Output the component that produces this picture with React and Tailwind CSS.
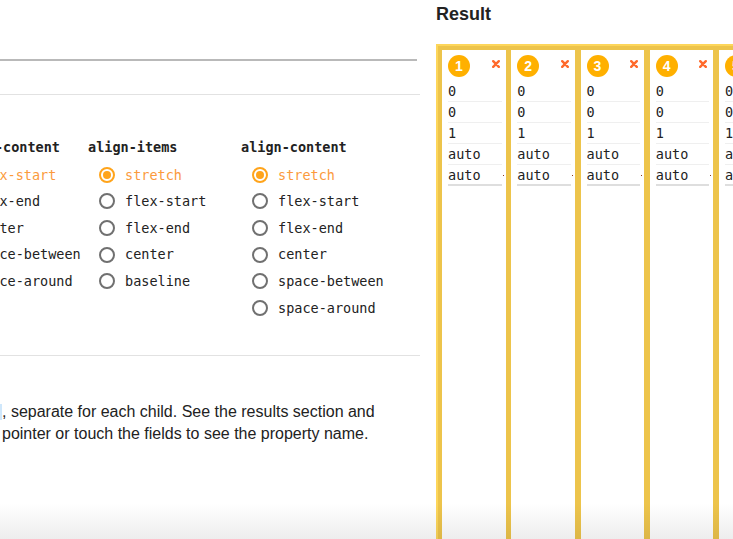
import React from "react";

const mono = { fontFamily: '"DejaVu Sans Mono", "Liberation Mono", monospace' };

const columns = [
  { title: "justify-content", width: "w-[150px]", options: ["flex-start", "flex-end", "center", "space-between", "space-around"] },
  { title: "align-items", width: "w-[153px]", options: ["stretch", "flex-start", "flex-end", "center", "baseline"] },
  { title: "align-content", width: "w-[160px]", options: ["stretch", "flex-start", "flex-end", "center", "space-between", "space-around"] },
];

const items = [1, 2, 3, 4, 5];
const values = ["0", "0", "1", "auto", "auto"];

export default function App() {
  return (
    <div
      className="relative flex h-[539px] w-[733px] overflow-hidden bg-white text-[#222]"
      style={{ fontFamily: '"Liberation Sans", Arial, sans-serif' }}
    >
      <div className="w-[420px] shrink-0 overflow-hidden">
        <div className="mt-[59px] h-[2px] w-[417px] bg-[#b9b9b9]" />
        <div className="mt-[33px] h-px w-full bg-[#e2e2e2]" />

        <div className="-ml-[62px] mt-[42px] flex" style={mono}>
          {columns.map((col) => (
            <RadioGroup key={col.title} {...col} />
          ))}
        </div>

        <div className="mt-[34px] h-px w-full bg-[#e2e2e2]" />

        <div className="mt-[45px] text-[16px] leading-[22px] text-[#222]">
          <p className="whitespace-nowrap">
            <span className="inline-block h-[16px] w-[2px] bg-[#cfe7fb] align-[-3px]" />
            , separate for each child. See the results section and
          </p>
          <p className="whitespace-nowrap pl-[2px]">pointer or touch the fields to see the property name.</p>
        </div>
      </div>

      <div className="ml-[16px] flex min-w-0 flex-1 flex-col">
        <h2 className="mt-[4px] h-[20px] text-[18px] font-bold leading-[20px] text-[#222]">Result</h2>
        <div className="mt-[20px] flex flex-1 gap-[5.75px] overflow-hidden bg-[#edc44b] pl-[6px] pt-[6px] shadow-[inset_2px_2px_0_0_#fdd65a]">
          {items.map((n) => (
            <FlexItem key={n} n={n} />
          ))}
        </div>
      </div>

      <div className="pointer-events-none absolute bottom-0 left-0 h-[36px] w-full bg-gradient-to-b from-transparent to-black/[0.07]" />
    </div>
  );
}

function RadioGroup({ title, width, options }) {
  return (
    <div className={`${width} shrink-0`}>
      <p className="h-[20px] whitespace-nowrap text-[13.5px] font-bold leading-[20px]">{title}</p>
      <div className="mt-[4.5px]">
        {options.map((opt, i) => (
          <div key={opt} className="flex h-[26.6px] items-center whitespace-nowrap pl-[11px]">
            <Radio checked={i === 0} />
            <span className={`ml-[10px] text-[13.5px] ${i === 0 ? "text-[#fb9a3c]" : "text-[#222]"}`}>{opt}</span>
          </div>
        ))}
      </div>
    </div>
  );
}

function Radio({ checked }) {
  if (checked) {
    return (
      <span className="flex h-[16px] w-[16px] shrink-0 items-center justify-center rounded-full border-2 border-[#ffa41b] bg-white">
        <span className="h-[8px] w-[8px] rounded-full bg-[#ffa41b]" />
      </span>
    );
  }
  return <span className="h-[16px] w-[16px] shrink-0 rounded-full border-2 border-[#707070] bg-white" />;
}

function FlexItem({ n }) {
  return (
    <div className="flex w-[63.5px] shrink-0 flex-col bg-white px-[6px] pr-[4px]">
      <div className="flex h-[31px] items-start justify-between pt-[5px]">
        <span className="flex h-[22px] w-[22px] items-center justify-center rounded-full bg-[#ffb000] text-[14px] font-bold text-white">
          {n}
        </span>
        <svg width="8" height="8" viewBox="0 0 8 8" className="mr-[2px] mt-[5px]">
          <path d="M1.2 1.2L6.8 6.8M6.8 1.2L1.2 6.8" stroke="#ff6a2c" strokeWidth="2.4" strokeLinecap="round" />
        </svg>
      </div>
      <div style={mono}>
        {values.map((v, i) => (
          <div
            key={i}
            className={`relative flex h-[21px] items-start pt-[1px] text-[13.5px] leading-[18px] text-[#222] ${
              i === values.length - 1 ? "border-b-2 border-[#dedede]" : "border-b border-[#efefef]"
            }`}
          >
            {v}
            {i === values.length - 1 && <span className="absolute right-[-2px] top-[10px] h-px w-px bg-[#8a3a20]" />}
          </div>
        ))}
      </div>
    </div>
  );
}
